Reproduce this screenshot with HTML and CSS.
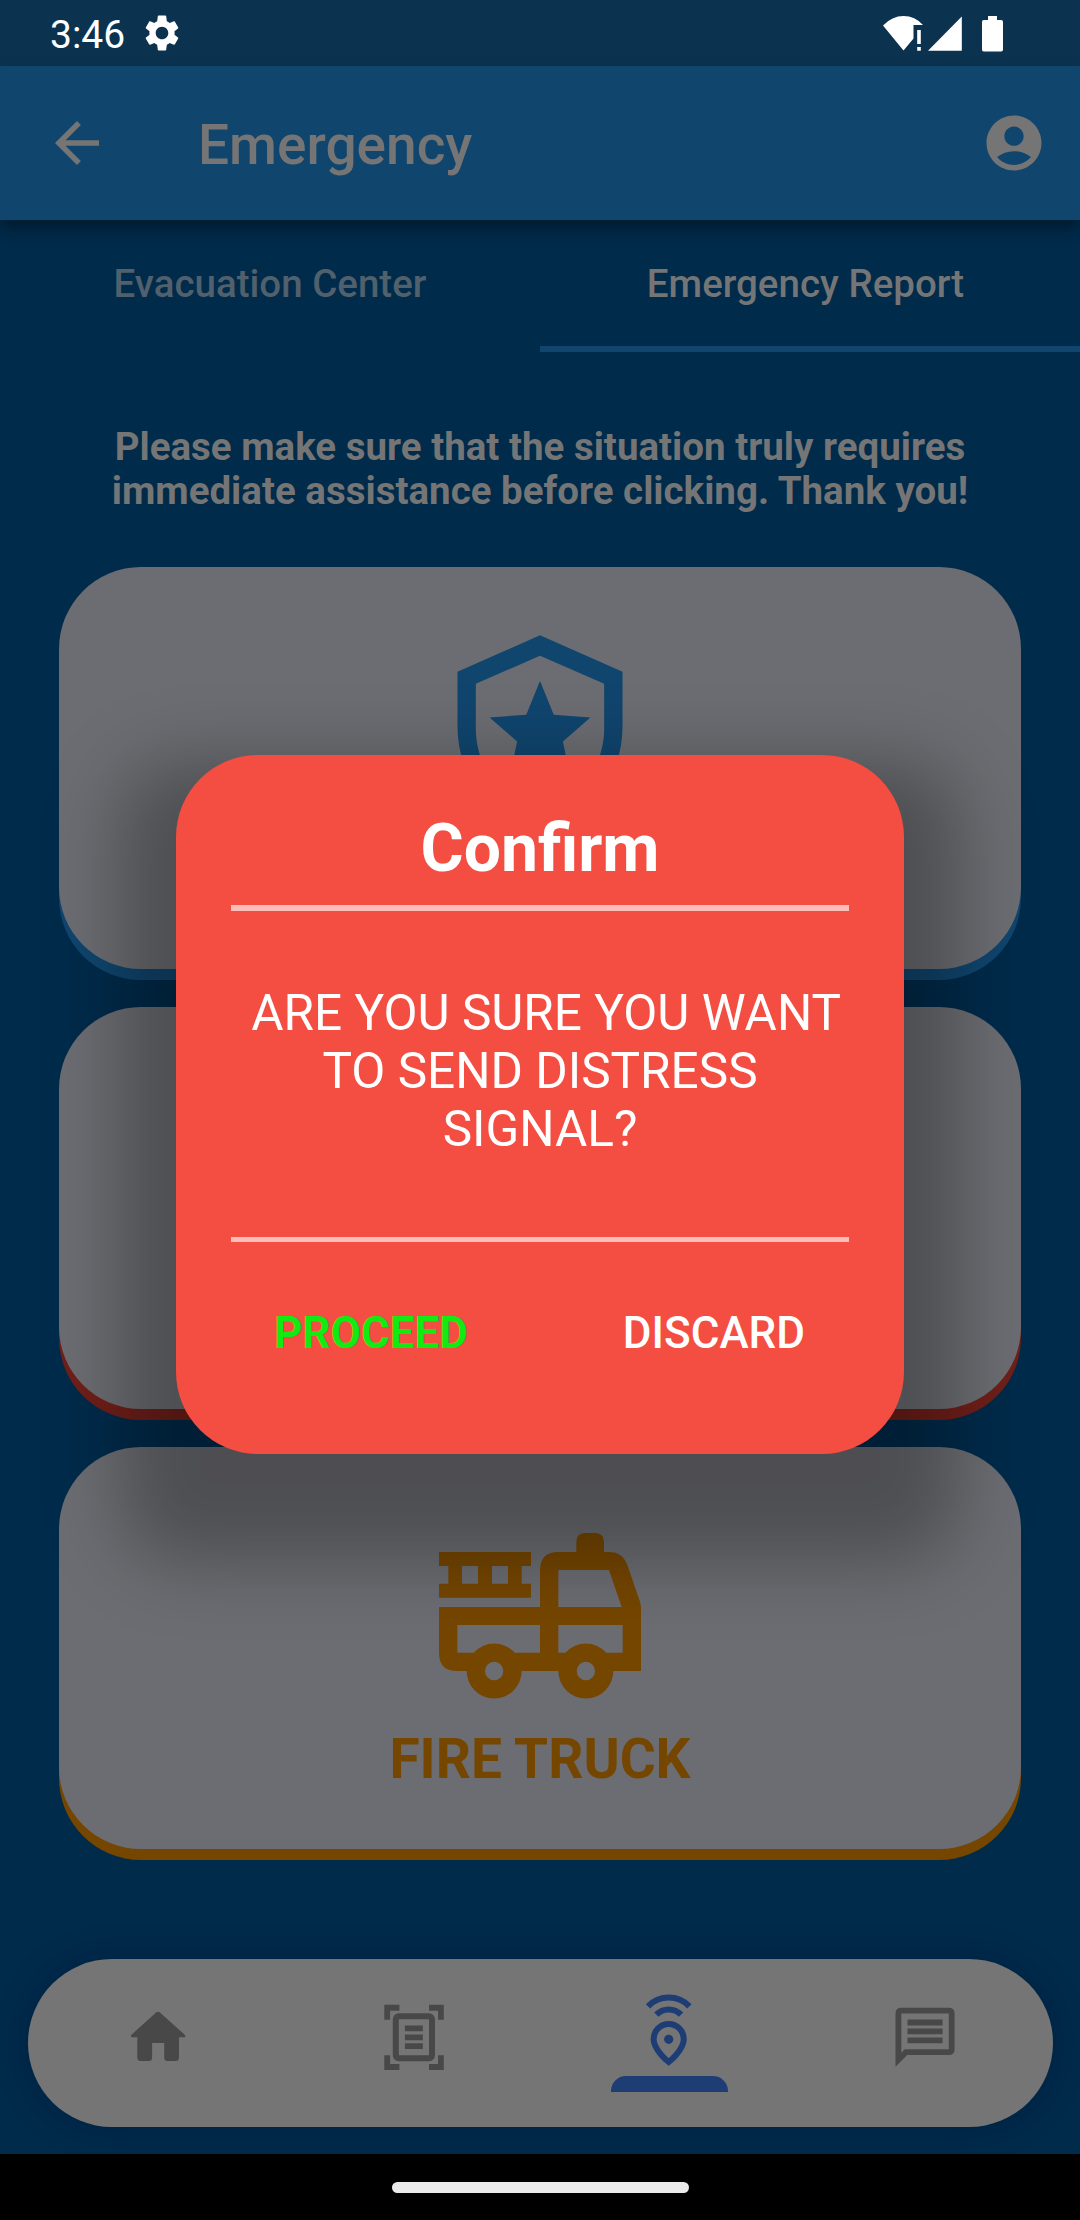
FILE: index.html
```html
<!DOCTYPE html>
<html lang="en">
<head>
<meta charset="utf-8">
<title>Emergency</title>
<link rel="stylesheet" href="styles.css">
</head>
<body>
<div class="screen">
  <header class="status-bar">
    <span class="clock">3:46</span>
    <svg class="gear" viewBox="0 0 24 24"><path d="M19.14 12.94c.04-.3.06-.61.06-.94 0-.32-.02-.64-.07-.94l2.03-1.58c.18-.14.23-.41.12-.61l-1.92-3.32c-.12-.22-.37-.29-.59-.22l-2.39.96c-.5-.38-1.03-.7-1.62-.94L14.4 2.400c-.04-.24-.24-.4-.48-.4h-3.840c-.24 0-.43.16-.47.4l-.36 2.950c-.59.24-1.130.57-1.620.94l-2.390-.96c-.22-.08-.47 0-.59.22L2.740 8.870c-.12.21-.08.47.12.61l2.030 1.580c-.05.3-.09.63-.09.940s.02.640.07.940l-2.030 1.580c-.18.14-.23.41-.12.610l1.920 3.320c.12.22.37.29.59.22l2.390-.96c.5.38 1.030.7 1.620.940l.36 2.950c.05.24.24.4.48.4h3.840c.24 0 .44-.16.47-.4l.36-2.950c.59-.24 1.130-.56 1.620-.940l2.390.96c.22.08.47 0 .59-.22l1.920-3.320c.12-.22.07-.47-.12-.61l-2.010-1.580zM12 15.600c-1.980 0-3.600-1.620-3.600-3.600s1.620-3.600 3.600-3.600 3.600 1.620 3.600 3.600-1.620 3.600-3.600 3.600z"/></svg>
    <svg class="signals" viewBox="0 0 124 40">
      <path d="M3 12.500Q12 3 23.500 3T43 12H33.500V25.500L23.500 37.500z"/>
      <path d="M37.200 17h3.600v14h-3.600zM37.200 34h3.600v3.800h-3.600z"/>
      <path d="M48 37.700L81.800 3.500V37.700z"/>
      <path d="M108 3h9v4h4.200q1.800 0 1.800 1.800V36.800q0 1.800-1.800 1.800H103.800q-1.800 0-1.800-1.800V8.800q0-1.800 1.800-1.800H108z"/>
    </svg>
  </header>

  <div class="app-bar">
    <svg class="bar-icon" viewBox="0 0 24 24"><path d="M20 11H7.830l5.590-5.590L12 4l-8 8 8 8 1.410-1.410L7.830 13H20v-2z"/></svg>
    <h1 class="title">Emergency</h1>
    <svg class="bar-icon" viewBox="0 0 24 24"><path d="M12 2C6.480 2 2 6.480 2 12s4.480 10 10 10 10-4.480 10-10S17.520 2 12 2zm0 4c1.930 0 3.500 1.570 3.500 3.500S13.930 13 12 13s-3.500-1.570-3.500-3.500S10.070 6 12 6zm0 14c-2.030 0-4.430-.82-6.140-2.880C7.550 15.800 9.680 15 12 15s4.450.8 6.140 2.120C16.430 19.180 14.030 20 12 20z"/></svg>
  </div>

  <main class="content">
    <nav class="tabs">
      <div class="tab">Evacuation Center</div>
      <div class="tab tab-active">Emergency Report</div>
    </nav>
    <p class="notice">Please make sure that the situation truly requires<br>immediate assistance before clicking. Thank you!</p>
    <div class="cards">
      <section class="card card-police">
        <svg class="card-icon" viewBox="0 0 24 24"><path d="M21 11C21 16.500 17.200 21.700 12 23C6.800 21.700 3 16.500 3 11V5L12 1L21 5V11M12 21C15.800 20 19 15.500 19 11.200V6.300L12 3.240L5 6.300V11.200C5 15.500 8.200 20 12 21M15.400 17L12 14.800L8.600 17L9.500 12.600L6.500 9.980L10.500 9.670L12 6L13.500 9.670L17.500 9.970L14.500 12.600z"/></svg>
      </section>
      <section class="card card-ambulance"></section>
      <section class="card card-fire">
        <svg class="card-icon" viewBox="90 18 660 660">
          <path fill-rule="evenodd" d="M117 156H393V198H365V251H393V293H117V251H145V198H117zM186 198V251H234V198zM276 198V251H324V198z"/>
          <path fill-rule="evenodd" d="M117 321H420V211Q420 156 475 156H529V127Q529 99 557 99H584Q612 99 612 127V156H627Q668 156 682 195L719 302Q723 312 723 325V513H640A82.500 82.500 0 0 1 475 513H365A82.500 82.500 0 0 1 200 513H172Q117 513 117 458zM475 210V321H665L627 210zM172 375V458H221A82.500 82.500 0 0 1 344 458H420V375zM475 375V458H496A82.500 82.500 0 0 1 619 458H668V375zM255 513a27.500 27.500 0 1 0 55 0a27.500 27.500 0 1 0-55 0zM530 513a27.500 27.500 0 1 0 55 0a27.500 27.500 0 1 0-55 0z"/>
        </svg>
        <h2 class="card-label">FIRE TRUCK</h2>
      </section>
    </div>
    <nav class="bottom-nav">
      <div class="nav-item">
        <svg class="nav-icon" viewBox="0 0 80 100"><path d="M37.500 26Q40 23.700 42.500 26L67 48Q68 50.300 65.500 50.300H61V70.500Q61 74 57.500 74H49.500Q46.200 74 46.200 70.500V56H34.100V70.500Q34.100 74 30.600 74H22.800Q19.300 74 19.300 70.500V50.300H14.500Q12 50.300 13.200 48z"/></svg>
      </div>
      <div class="nav-item">
        <svg class="nav-icon" viewBox="0 0 80 100"><path d="M10.300 17.700H25.400V23.700H16.100V32.700H10.300zM55 17.700H69.800V32.700H64V23.700H55zM10.300 68.300H16.100V77H25.400V83H10.300zM64 68.300H69.800V83H55V77H64zM30.900 38.500H48.800V44.300H30.900zM30.900 47.500H48.800V53.300H30.900zM30.900 56.300H48.800V62.100H30.900z"/><rect class="line" x="21.800" y="29.200" width="36.200" height="42" rx="3"/></svg>
      </div>
      <div class="nav-item nav-active">
        <svg class="nav-icon" viewBox="0 0 80 100"><path class="line" d="M19 19.300A28.700 28.700 0 0 1 60.400 19.300M27.300 27.700A17.400 17.400 0 0 1 52.100 27.700M39.700 37A15.100 15.300 0 0 0 24.600 52.300C24.600 63 39.700 75 39.700 75S54.800 63 54.800 52.300A15.100 15.300 0 0 0 39.700 37z"/><circle cx="39.700" cy="52.300" r="4.600"/></svg>
        <span class="nav-indicator"></span>
      </div>
      <div class="nav-item">
        <svg class="nav-icon" viewBox="0 0 80 100"><path fill-rule="evenodd" d="M10.500 79.700V26.500Q10.500 20.700 16.300 20.700H63.800Q69.600 20.700 69.600 26.500V62.200Q69.600 68 63.800 68H22.200zM16.300 65.700L19.700 62.300H63.800V26.500H16.300z"/><path d="M22.500 32.600H57.600V38.500H22.500zM22.500 41.400H57.600V47.300H22.500zM22.500 50.400H57.600V56.300H22.500z"/></svg>
      </div>
    </nav>
  </main>

  <footer class="gesture-bar"><span class="handle"></span></footer>

  <div class="dialog-shadow"></div>
  <div class="dialog" role="dialog">
    <h2 class="dialog-title">Confirm</h2>
    <div class="rule"></div>
    <p class="dialog-text">&nbsp;ARE YOU SURE YOU WANT<br>TO SEND DISTRESS<br>SIGNAL?</p>
    <div class="rule"></div>
    <div class="actions">
      <button class="action action-proceed">PROCEED</button>
      <button class="action">DISCARD</button>
    </div>
  </div>
</div>
</body>
</html>
```
FILE: styles.css
```css
* { box-sizing: border-box; }

body {
  margin: 0;
  font-family: Roboto, "Liberation Sans", sans-serif;
}

h1, h2, p { margin: 0; }

.screen {
  position: relative;
  display: flex;
  flex-direction: column;
  width: 1080px;
  height: 2220px;
  overflow: hidden;
  background: #002b4b;
  color: #757575;
}

/* Status bar */
.status-bar {
  display: flex;
  align-items: center;
  flex: none;
  height: 66px;
  padding: 0 76px 0 50px;
  background: #0b3350;
  color: #fff;
  fill: #fff;
}
.clock {
  width: 91px;
  padding-top: 3px;
  font-size: 39px;
  line-height: 46px;
}
.gear { width: 42px; height: 42px; }
.signals { width: 124px; height: 40px; margin-left: auto; margin-top: -1px; }

/* App bar */
.app-bar {
  position: relative;
  display: flex;
  align-items: center;
  flex: none;
  height: 154px;
  padding: 0 33px 0 44px;
  background: #10456e;
  fill: #757575;
  box-shadow: 0 8px 16px rgba(0, 0, 0, .4);
}
.bar-icon { width: 66px; height: 66px; }
.title {
  flex: 1;
  padding: 3px 0 0 88px;
  font-size: 55px;
  font-weight: 500;
  line-height: 64px;
}

/* Page */
.content {
  display: flex;
  flex-direction: column;
  flex: none;
  height: 1934px;
}
.tabs { display: flex; height: 132px; }
.tab {
  flex: none;
  width: 50%;
  padding-top: 41px;
  border-bottom: 6px solid transparent;
  font-size: 38.5px;
  font-weight: 500;
  line-height: 45px;
  text-align: center;
  color: #50606c;
}
.tab-active {
  padding-right: 9px;
  border-color: #10456e;
  color: #757575;
}
.notice {
  padding-top: 73px;
  font-size: 38.5px;
  font-weight: 700;
  line-height: 44px;
  text-align: center;
}
.cards {
  display: flex;
  flex-direction: column;
  gap: 38.5px;
  padding: 54px 59px 0;
}
.card {
  display: flex;
  flex-direction: column;
  align-items: center;
  height: 401.5px;
  padding-top: 59px;
  border-radius: 82px;
  background: #6c6d72;
  box-shadow: 0 11px 0 var(--accent);
  color: var(--accent);
  fill: var(--accent);
}
.card-police { --accent: #10456e; }
.card-ambulance { --accent: #701f19; }
.card-fire { --accent: #754600; }
.card-icon { width: 220px; height: 220px; }
.card-label {
  padding-top: 1px;
  font-size: 55px;
  font-weight: 700;
  line-height: 64px;
}

/* Bottom navigation */
.bottom-nav {
  display: flex;
  height: 168px;
  margin: auto 27.5px 27px;
  padding-left: 3px;
  border-radius: 84px;
  background: #757575;
  fill: #484848;
  stroke: #484848;
  box-shadow: 0 0 34px rgba(0, 10, 45, .3);
}
.nav-item {
  position: relative;
  display: flex;
  flex: 1;
  justify-content: center;
  padding-top: 28px;
}
.nav-icon { width: 80px; height: 100px; stroke: none; }
.line { fill: none; stroke: #484848; stroke-width: 6; }
.nav-active { fill: #1f3d75; }
.nav-active .line { stroke: #1f3d75; }
.nav-indicator {
  position: absolute;
  left: 69px;
  top: 117px;
  width: 117px;
  height: 16px;
  border-radius: 15px 15px 0 0;
  background: #1f3d75;
}

/* System gesture bar */
.gesture-bar {
  display: flex;
  align-items: center;
  justify-content: center;
  flex: 1;
  background: #000;
}
.handle {
  width: 297px;
  height: 11px;
  border-radius: 6px;
  background: #ebebeb;
}

/* Confirmation dialog */
.dialog-shadow {
  position: absolute;
  left: 120px;
  top: 762px;
  width: 840px;
  height: 800px;
  border-radius: 60px;
  background: rgba(0, 0, 0, .28);
  filter: blur(36px);
}
.dialog {
  position: absolute;
  left: 176px;
  top: 755px;
  width: 728px;
  height: 698.5px;
  padding: 55px 55px 0;
  border-radius: 82px;
  background: #f44d41;
  color: #fff;
  text-align: center;
}
.dialog-title {
  font-size: 66px;
  font-weight: 700;
  line-height: 77px;
}
.rule {
  height: 5.5px;
  margin-top: 18px;
  background: #fdbdb9;
}
.dialog-text {
  padding: 73px 0 61px;
  font-size: 49.5px;
  line-height: 58px;
}
.actions {
  display: flex;
  justify-content: space-between;
  padding: 65px 44px 0 43px;
}
.action {
  padding: 0;
  border: 0;
  background: none;
  font: 500 44px/52px Roboto, "Liberation Sans", sans-serif;
  color: #fff;
}
.action-proceed { font-weight: 700; color: #12ea12; }
```
